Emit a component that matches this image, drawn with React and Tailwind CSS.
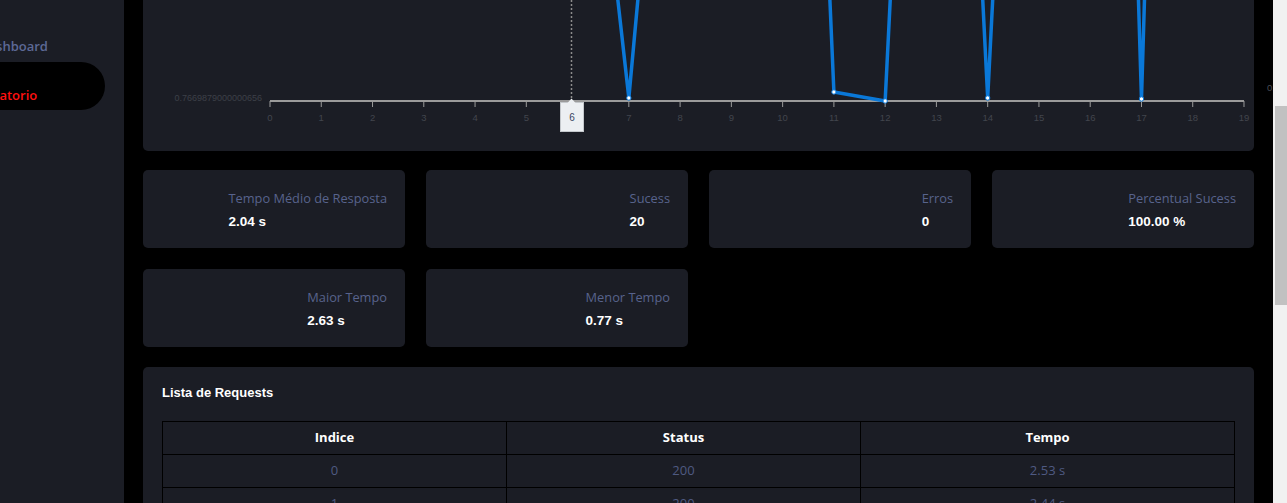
import React from "react";

const STEP = 51.263;
const X0 = 127;
const AXIS_Y = 101;

const points = [
  -700, -900, -650, -800, -1000, -700, -359, 98, -460, -800,
  -1088, 92, 101, -920, 98, -907, -1594, 99, -1594, -900,
];

const stats = [
  { label: "Tempo Médio de Resposta", value: "2.04 s" },
  { label: "Sucess", value: "20" },
  { label: "Erros", value: "0" },
  { label: "Percentual Sucess", value: "100.00 %" },
  { label: "Maior Tempo", value: "2.63 s" },
  { label: "Menor Tempo", value: "0.77 s" },
];

const requests = [
  { indice: 0, status: 200, tempo: "2.53 s" },
  { indice: 1, status: 200, tempo: "2.44 s" },
  { indice: 2, status: 200, tempo: "2.12 s" },
];

const Chart = () => {
  const coords = points.map((y, i) => [X0 + i * STEP, y]);
  const path = coords.map(([x, y]) => `${x},${y}`).join(" ");

  return (
    <svg width="1111" height="151" className="block overflow-visible">
      {/* y label */}
      <text x="119" y="101" textAnchor="end" fontSize="9" fill="#3d4048" fontFamily="Liberation Sans, sans-serif">
        0.7669879000000656
      </text>
      <text x="1124" y="91" fontSize="9.5" fill="#4a4d55" fontFamily="Liberation Sans, sans-serif">
        0.
      </text>

      {/* axis */}
      <line x1={X0} y1={AXIS_Y} x2={X0 + 19 * STEP} y2={AXIS_Y} stroke="#9b9b9b" strokeWidth="2" />
      {coords.map(([x], i) => (
        <g key={i}>
          <line x1={x} y1={AXIS_Y} x2={x} y2={AXIS_Y + 6} stroke="#9b9b9b" strokeWidth="1" />
          <text x={x} y="121" textAnchor="middle" fontSize="9.5" fill="#42454d" fontFamily="Liberation Sans, sans-serif">
            {i}
          </text>
        </g>
      ))}

      {/* cursor */}
      <line x1="428.5" y1="0" x2="428.5" y2="98" stroke="#8c8c8c" strokeWidth="1.5" strokeDasharray="2 2" />

      {/* series */}
      <polyline points={path} fill="none" stroke="#0a78d8" strokeWidth="3.5" strokeLinejoin="round" />
      {coords
        .filter(([, y]) => y > 0)
        .map(([x, y], i) => (
          <circle key={i} cx={x} cy={y} r="2.2" fill="#ffffff" stroke="#0a78d8" strokeWidth="1" />
        ))}

      {/* tooltip */}
      <rect x="417.5" y="102.5" width="23" height="29" fill="#eceff2" stroke="#c4c8cc" />
      <polygon points="424.5,103 428.5,98.5 432.5,103" fill="#eceff2" />
      <text x="429" y="121" textAnchor="middle" fontSize="10" fill="#3a4560" fontFamily="Liberation Sans, sans-serif">
        6
      </text>
    </svg>
  );
};

const App = () => {
  return (
    <div className="flex h-[503px] w-[1287px] overflow-hidden bg-black font-['Open_Sans',sans-serif]">
      {/* Sidebar */}
      <aside className="w-[124px] shrink-0 overflow-hidden bg-[#1b1d25] pt-[36px]">
        <div className="-ml-[21px] h-[20px] text-[13px] font-semibold leading-[20px] text-[#5d6996]">
          Dashboard
        </div>
        <div className="mt-[6px] h-[48px] w-[105px] rounded-r-full bg-black">
          <div className="-ml-[20px] pt-[23px] text-[13px] font-semibold leading-[20px] text-[#ff1010]">
            Relatorio
          </div>
        </div>
      </aside>

      {/* Main */}
      <main className="w-[1149px] shrink-0 overflow-hidden px-[19px]">
        {/* Chart card */}
        <div className="h-[151px] overflow-visible rounded-b-[5px] bg-[#1b1d25]">
          <Chart />
        </div>

        {/* Stats */}
        <div className="mt-[19px] grid grid-cols-4 gap-x-[21px] gap-y-[21px]">
          {stats.map((stat, index) => (
            <div
              key={index}
              className="flex h-[78px] justify-end rounded-[5px] bg-[#1b1d25] pr-[18px] pt-[19px]"
            >
              <div className="text-left">
                <p className="text-[12.8px] leading-[18px] text-[#58638c]">{stat.label}</p>
                <p className="mt-[5px] font-['Liberation_Sans',sans-serif] text-[13.5px] font-bold leading-[20px] text-white">
                  {stat.value}
                </p>
              </div>
            </div>
          ))}
        </div>

        {/* Requests */}
        <div className="mt-[20px] h-[200px] rounded-[5px] bg-[#1b1d25] px-[19px] pt-[17px]">
          <h2 className="font-['Liberation_Sans',sans-serif] text-[13px] font-bold leading-[18px] text-white">
            Lista de Requests
          </h2>
          <table className="mt-[19px] w-full border-collapse text-[13px]">
            <thead>
              <tr className="h-[33px]">
                <th className="w-[344px] border border-black font-bold text-white">Indice</th>
                <th className="w-[354px] border border-black font-bold text-white">Status</th>
                <th className="border border-black font-bold text-white">Tempo</th>
              </tr>
            </thead>
            <tbody>
              {requests.map((req) => (
                <tr key={req.indice} className="h-[33px] text-center text-[#4f5a82]">
                  <td className="border border-black">{req.indice}</td>
                  <td className="border border-black">{req.status}</td>
                  <td className="border border-black">{req.tempo}</td>
                </tr>
              ))}
            </tbody>
          </table>
        </div>
      </main>

      {/* Scrollbar */}
      <div className="w-[14px] shrink-0 bg-[#f1f1f1] pl-[2px] pt-[106px]">
        <div className="h-[199px] w-[12px] bg-[#c1c1c1]" />
      </div>
    </div>
  );
};

export default App;
